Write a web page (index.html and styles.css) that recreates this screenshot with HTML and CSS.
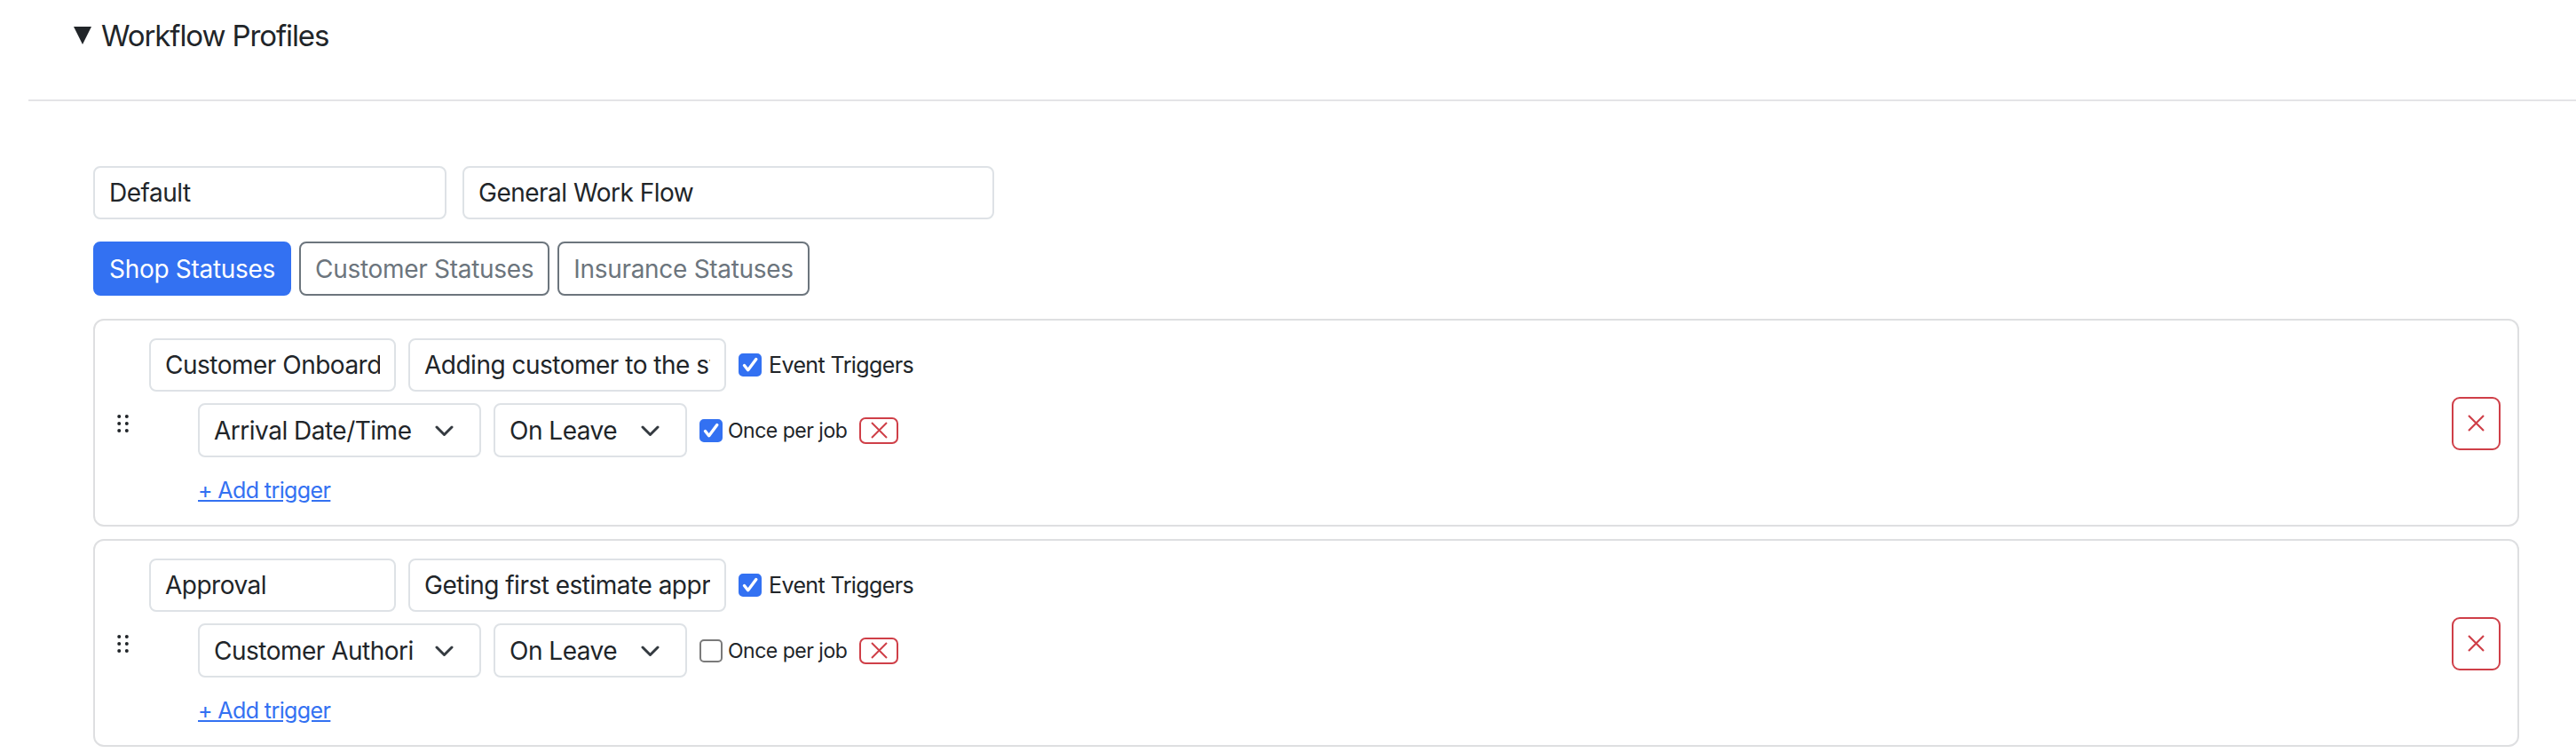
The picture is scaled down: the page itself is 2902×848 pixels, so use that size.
FILE: index.html
```html
<!DOCTYPE html>
<html lang="en">
<head>
    <meta charset="UTF-8">
    <meta name="viewport" content="width=device-width, initial-scale=1.0">
    <title>Workflow Profiles</title>
    <link rel="stylesheet" href="styles.css">
</head>
<body>
    <details class="profiles" open>
        <summary class="profiles-title">Workflow Profiles</summary>

        <div class="profiles-body">
            <div class="profile-fields">
                <input class="field field-code" type="text" value="Default">
                <input class="field field-name" type="text" value="General Work Flow">
            </div>

            <div class="status-tabs">
                <button class="tab tab-active">Shop Statuses</button>
                <button class="tab">Customer Statuses</button>
                <button class="tab">Insurance Statuses</button>
            </div>

            <div class="status-list">
                <!-- status 1 -->
                <div class="status-card">
                    <svg class="drag-handle" viewBox="0 0 13 20">
                        <circle cx="2.2" cy="2" r="2"/><circle cx="10.8" cy="2" r="2"/>
                        <circle cx="2.2" cy="10" r="2"/><circle cx="10.8" cy="10" r="2"/>
                        <circle cx="2.2" cy="18" r="2"/><circle cx="10.8" cy="18" r="2"/>
                    </svg>
                    <div class="status-main">
                        <div class="status-row">
                            <input class="field status-name" type="text" value="Customer Onboard">
                            <input class="field status-desc" type="text" value="Adding customer to the system">
                            <label class="check">
                                <span class="box checked"><svg viewBox="0 0 26 26"><path d="M6.5 13.5l4.2 5.2L19.8 6.5"/></svg></span>
                                Event Triggers
                            </label>
                        </div>
                        <div class="trigger-row">
                            <div class="select-wrap trigger-field">
                                <select class="field select"><option>Arrival Date/Time</option></select>
                                <svg class="chevron" viewBox="0 0 21 12"><path d="M2 2l8.5 8.5L19 2"/></svg>
                            </div>
                            <div class="select-wrap trigger-event">
                                <select class="field select"><option>On Leave</option></select>
                                <svg class="chevron" viewBox="0 0 21 12"><path d="M2 2l8.5 8.5L19 2"/></svg>
                            </div>
                            <label class="check check-sm">
                                <span class="box checked"><svg viewBox="0 0 26 26"><path d="M6.5 13.5l4.2 5.2L19.8 6.5"/></svg></span>
                                Once per job
                            </label>
                            <button class="btn-remove-sm"><svg viewBox="0 0 19 19"><path d="M1 1l17 17M18 1L1 18"/></svg></button>
                        </div>
                        <a href="#" class="add-trigger">+ Add trigger</a>
                    </div>
                    <button class="btn-remove"><svg viewBox="0 0 19 19"><path d="M1 1l17 17M18 1L1 18"/></svg></button>
                </div>

                <!-- status 2 -->
                <div class="status-card">
                    <svg class="drag-handle" viewBox="0 0 13 20">
                        <circle cx="2.2" cy="2" r="2"/><circle cx="10.8" cy="2" r="2"/>
                        <circle cx="2.2" cy="10" r="2"/><circle cx="10.8" cy="10" r="2"/>
                        <circle cx="2.2" cy="18" r="2"/><circle cx="10.8" cy="18" r="2"/>
                    </svg>
                    <div class="status-main">
                        <div class="status-row">
                            <input class="field status-name" type="text" value="Approval">
                            <input class="field status-desc" type="text" value="Geting first estimate approved">
                            <label class="check">
                                <span class="box checked"><svg viewBox="0 0 26 26"><path d="M6.5 13.5l4.2 5.2L19.8 6.5"/></svg></span>
                                Event Triggers
                            </label>
                        </div>
                        <div class="trigger-row">
                            <div class="select-wrap trigger-field">
                                <select class="field select"><option>Customer Authorization</option></select>
                                <svg class="chevron" viewBox="0 0 21 12"><path d="M2 2l8.5 8.5L19 2"/></svg>
                            </div>
                            <div class="select-wrap trigger-event">
                                <select class="field select"><option>On Leave</option></select>
                                <svg class="chevron" viewBox="0 0 21 12"><path d="M2 2l8.5 8.5L19 2"/></svg>
                            </div>
                            <label class="check check-sm">
                                <span class="box"></span>
                                Once per job
                            </label>
                            <button class="btn-remove-sm"><svg viewBox="0 0 19 19"><path d="M1 1l17 17M18 1L1 18"/></svg></button>
                        </div>
                        <a href="#" class="add-trigger">+ Add trigger</a>
                    </div>
                    <button class="btn-remove"><svg viewBox="0 0 19 19"><path d="M1 1l17 17M18 1L1 18"/></svg></button>
                </div>
            </div>
        </div>
    </details>
</body>
</html>
```

FILE: styles.css
```css
body {
    margin: 0;
    font-family: Inter, "Noto Sans", sans-serif;
    color: #212529;
    background: #fff;
}

.profiles {
    margin-left: 32px;
}

.profiles-title {
    list-style: none;
    display: flex;
    align-items: center;
    gap: 11px;
    padding: 19px 0 51px 51px;
    font-size: 33px;
    line-height: 42px;
    letter-spacing: -1.1px;
    border-bottom: 2px solid #e4e4e7;
    cursor: pointer;
}

.profiles-title::-webkit-details-marker {
    display: none;
}

.profiles-title::before {
    content: "";
    width: 20px;
    height: 20px;
    background: #212529;
    clip-path: polygon(0 0, 100% 0, 50% 100%);
}

.profiles-body {
    padding: 73px 64px 0 73px;
}

/* inputs & selects */
.field {
    box-sizing: border-box;
    height: 60px;
    padding: 0 16px;
    border: 2px solid #dee2e6;
    border-radius: 8px;
    background: #fff;
    color: #212529;
    font-family: inherit;
    font-size: 28px;
    letter-spacing: -0.5px;
}

.profile-fields {
    display: flex;
    gap: 18px;
}

.field-code { width: 398px; }
.field-name { width: 599px; }

/* status type tabs */
.status-tabs {
    display: flex;
    gap: 9px;
    margin-top: 25px;
}

.tab {
    height: 61px;
    padding: 0 16px;
    border: 2px solid #6c757d;
    border-radius: 8px;
    background: #fff;
    color: #6c757d;
    font-family: inherit;
    font-size: 28px;
    letter-spacing: -0.3px;
    cursor: pointer;
}

.tab-active {
    background: #3371f2;
    border-color: #3371f2;
    color: #fff;
}

/* status cards */
.status-list {
    display: flex;
    flex-direction: column;
    gap: 14px;
    margin-top: 26px;
}

.status-card {
    display: flex;
    align-items: center;
    padding: 20px 19px 19px 25px;
    border: 2px solid #dedfe1;
    border-radius: 12px;
}

.drag-handle {
    flex-shrink: 0;
    width: 13px;
    height: 20px;
    margin-right: 23px;
    fill: #212529;
    cursor: grab;
}

.status-main {
    flex: 1;
    display: flex;
    flex-direction: column;
    align-items: flex-start;
}

.status-row,
.trigger-row {
    display: flex;
    align-items: center;
    gap: 14px;
}

.status-name { width: 278px; }
.status-desc { width: 358px; }

.trigger-row {
    margin: 13px 0 0 55px;
}

.select-wrap {
    position: relative;
}

.select {
    appearance: none;
    width: 100%;
    height: 61px;
    padding-right: 74px;
}

.trigger-field { width: 319px; }
.trigger-event { width: 218px; }

.chevron {
    position: absolute;
    right: 31px;
    top: 50%;
    width: 21px;
    height: 12px;
    margin-top: -6px;
    fill: none;
    stroke: #343a40;
    stroke-width: 3;
    stroke-linecap: round;
    stroke-linejoin: round;
    pointer-events: none;
}

/* checkboxes */
.check {
    display: flex;
    align-items: center;
    gap: 8px;
    font-size: 25px;
    letter-spacing: -0.6px;
    cursor: pointer;
}

.check-sm {
    gap: 6px;
    font-size: 23px;
    letter-spacing: -0.5px;
}

.box {
    box-sizing: border-box;
    width: 26px;
    height: 26px;
    border: 2px solid #7a7a7a;
    border-radius: 5px;
    background: #fff;
}

.box.checked {
    border-color: #3371f2;
    background: #3371f2;
}

.box svg {
    display: block;
    width: 26px;
    height: 26px;
    margin: -2px;
    fill: none;
    stroke: #fff;
    stroke-width: 3.4;
    stroke-linecap: round;
    stroke-linejoin: round;
}

/* remove buttons */
.btn-remove,
.btn-remove-sm {
    display: flex;
    align-items: center;
    justify-content: center;
    padding: 0;
    border: 2px solid #cf3f48;
    background: #fff;
    color: #cf3f48;
    cursor: pointer;
}

.btn-remove-sm {
    width: 44px;
    height: 30px;
    border-radius: 7px;
}

.btn-remove {
    flex-shrink: 0;
    width: 55px;
    height: 60px;
    margin-left: auto;
    border-radius: 9px;
}

.btn-remove svg,
.btn-remove-sm svg {
    width: 19px;
    height: 19px;
    fill: none;
    stroke: currentColor;
    stroke-width: 2.2;
}

.btn-remove-sm svg {
    stroke-width: 2;
}

.add-trigger {
    margin: 18px 0 0 55px;
    font-size: 25px;
    line-height: 39px;
    letter-spacing: -0.6px;
    color: #3371f2;
    text-decoration: underline;
}
```
